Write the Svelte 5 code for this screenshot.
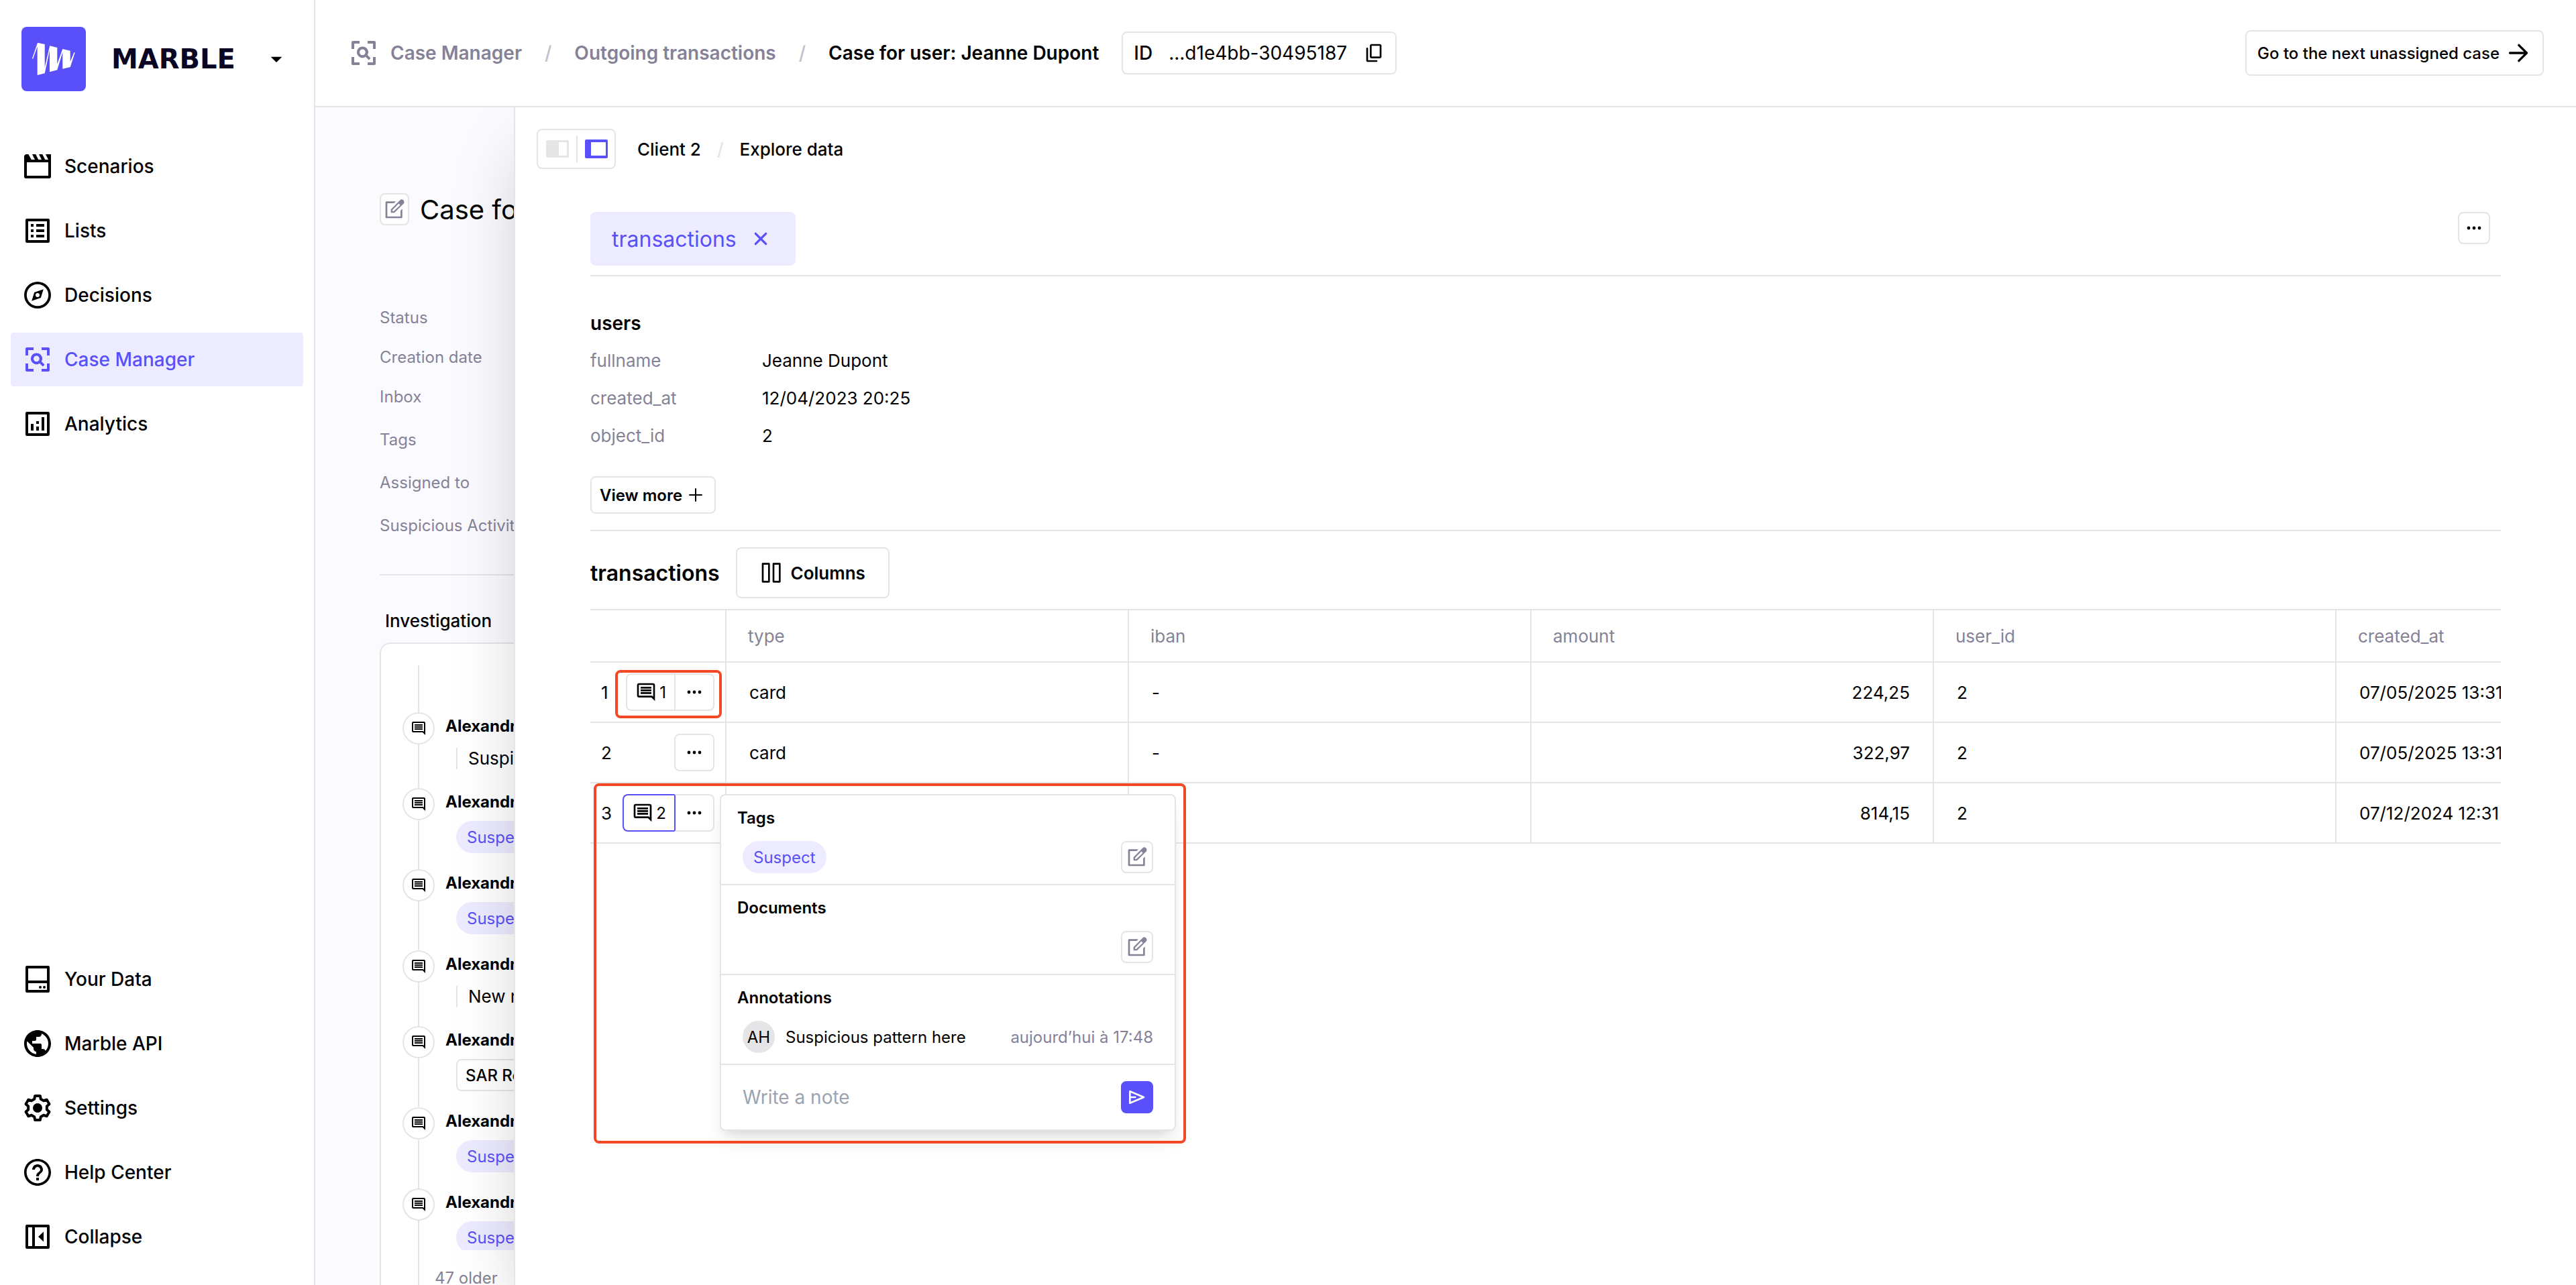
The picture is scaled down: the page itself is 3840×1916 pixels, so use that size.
<script>
	const frame = 'M4 3h16a1 1 0 0 1 1 1v16a1 1 0 0 1-1 1H4a1 1 0 0 1-1-1V4a1 1 0 0 1 1-1zM5 5v14h14V5z';

	// all paths are drawn on a 24 x 24 grid
	const icons = {
		scenarios:
			'M22 3h-4l2 4h-2.4l-2-4H13l2 4h-2.4l-2-4H8l2 4H7.4L5.2 3H3.8C2.8 3 2 3.8 2 4.8v14.9c0 .7.6 1.3 1.3 1.3h17.4c.7 0 1.3-.6 1.3-1.3zM4 9h16v10H4z',
		lists: frame + 'M7 7h2v2H7zM7 11h2v2H7zM7 15h2v2H7zM11 7h6v2h-6zM11 11h6v2h-6zM11 15h6v2h-6z',
		decisions:
			'M12 2a10 10 0 1 0 0 20 10 10 0 0 0 0-20zm0 1.9a8.1 8.1 0 1 1 0 16.2 8.1 8.1 0 0 1 0-16.2zM16.4 7.6 14.4 14 7.6 16.4 9.6 10zM12 10.5a1.5 1.5 0 1 0 0 3 1.5 1.5 0 0 0 0-3z',
		cases:
			'M3 4a1 1 0 0 1 1-1h5v2H5v4H3zM15 3h5a1 1 0 0 1 1 1v5h-2V5h-4zM3 15h2v4h4v2H4a1 1 0 0 1-1-1zM19 15h2v5a1 1 0 0 1-1 1h-5v-2h4zM11.2 7.2a4.2 4.2 0 1 0 2.3 7.7l2.4 2.4 1.4-1.4-2.4-2.4a4.2 4.2 0 0 0-3.7-6.3zm0 2a2.2 2.2 0 1 1 0 4.4 2.2 2.2 0 0 1 0-4.4z',
		analytics: frame + 'M7 12h2v5H7zM11 10h2v2h-2zM11 14h2v3h-2zM15 7h2v10h-2z',
		data: 'M4 2h16a1 1 0 0 1 1 1v18a1 1 0 0 1-1 1H4a1 1 0 0 1-1-1V3a1 1 0 0 1 1-1zM5 4v9h14V4zM5 15v5h14v-5zM14 17a1 1 0 1 0 0 2 1 1 0 0 0 0-2zM17 17a1 1 0 1 0 0 2 1 1 0 0 0 0-2z',
		api: 'M12 2C6.48 2 2 6.48 2 12s4.48 10 10 10 10-4.48 10-10S17.52 2 12 2zm-1 17.93c-3.95-.49-7-3.85-7-7.93 0-.62.08-1.21.21-1.79L9 15v1c0 1.1.9 2 2 2v1.93zm6.9-2.54c-.26-.81-1-1.39-1.9-1.39h-1v-3c0-.55-.45-1-1-1H8v-2h2c.55 0 1-.45 1-1V7h2c1.1 0 2-.9 2-2v-.41c2.93 1.19 5 4.06 5 7.41 0 2.08-.8 3.97-2.1 5.39z',
		help: 'M11 18h2v-2h-2v2zm1-16C6.48 2 2 6.48 2 12s4.48 10 10 10 10-4.48 10-10S17.52 2 12 2zm0 18.2c-4.5 0-8.2-3.7-8.2-8.2S7.5 3.8 12 3.8s8.2 3.7 8.2 8.2-3.7 8.2-8.2 8.2zM12 6c-2.21 0-4 1.79-4 4h2c0-1.1.9-2 2-2s2 .9 2 2c0 2-3 1.75-3 5h2c0-2.25 3-2.5 3-5 0-2.21-1.79-4-4-4z',
		collapse: frame + 'M8 5h2v14H8zM12.5 12l4-3.8v7.6z',
		comment:
			'M22 4c0-1.1-.9-2-2-2H4c-1.1 0-2 .9-2 2v12c0 1.1.9 2 2 2h14l4 4zM20 4v13.17L18.83 16H4V4zM6 12h12v2H6zM6 9h12v2H6zM6 6h12v2H6z',
		more: 'M6 10.2a1.8 1.8 0 1 0 0 3.6 1.8 1.8 0 0 0 0-3.6zM12 10.2a1.8 1.8 0 1 0 0 3.6 1.8 1.8 0 0 0 0-3.6zM18 10.2a1.8 1.8 0 1 0 0 3.6 1.8 1.8 0 0 0 0-3.6z',
		edit: 'M13.5 3.2H3.2c-.7 0-1.2.5-1.2 1.2v16.4c0 .7.5 1.2 1.2 1.2h16.4c.7 0 1.2-.5 1.2-1.2V11.5l-2 2V20H4V5.2h7.5zM21.8 1.7a2.4 2.4 0 0 0-3.4 0L8 12.1V16h3.9L22.3 5.6c1-1.1.6-2.9-.5-3.9zM16.8 5.7l1.7 1.7L11.1 14.2H9.8v-1.4z',
		caret: 'M7 10h10l-5 5z'
	};

	const mainNav = [
		{ label: 'Scenarios', icon: 'scenarios' },
		{ label: 'Lists', icon: 'lists' },
		{ label: 'Decisions', icon: 'decisions' },
		{ label: 'Case Manager', icon: 'cases', active: true },
		{ label: 'Analytics', icon: 'analytics' }
	];

	const bottomNav = [
		{ label: 'Your Data', icon: 'data' },
		{ label: 'Marble API', icon: 'api' },
		{ label: 'Settings', icon: 'settings' },
		{ label: 'Help Center', icon: 'help' },
		{ label: 'Collapse', icon: 'collapse' }
	];

	const details = ['Status', 'Creation date', 'Inbox'];
	const editableDetails = ['Tags', 'Assigned to', 'Suspicious Activity'];

	const events = [
		{ kind: 'note', text: 'Suspicious' },
		{ kind: 'tag', text: 'Suspect' },
		{ kind: 'tag', text: 'Suspect' },
		{ kind: 'note', text: 'New note' },
		{ kind: 'file', text: 'SAR Report' },
		{ kind: 'tag', text: 'Suspect' },
		{ kind: 'tag', text: 'Suspect' }
	];

	const user = [
		['fullname', 'Jeanne Dupont'],
		['created_at', '12/04/2023 20:25'],
		['object_id', '2']
	];

	const columns = ['type', 'iban', 'amount', 'user_id', 'created_at'];

	const rows = [
		{ notes: 1, type: 'card', iban: '-', amount: '224,25', user_id: '2', created_at: '07/05/2025 13:31' },
		{ notes: 0, type: 'card', iban: '-', amount: '322,97', user_id: '2', created_at: '07/05/2025 13:31' },
		{ notes: 2, type: 'card', iban: '-', amount: '814,15', user_id: '2', created_at: '07/12/2024 12:31' }
	];

	let openRow = $state(2);
	let note = $state('');

	function toggleNotes(i) {
		openRow = openRow === i ? -1 : i;
	}
</script>

{#snippet icon(name, size = 'md')}
	<svg class="icon {size}" viewBox="0 0 24 24" aria-hidden="true">
		{#if name === 'settings'}
			<path
				class="line"
				d="M9.6 5.4 10.1 3h3.8l.5 2.4 2.12 1.22 2.32-.77 1.9 3.3-1.82 1.63v2.44l1.82 1.63-1.9 3.3-2.32-.77-2.12 1.22-.5 2.4h-3.8l-.5-2.4-2.12-1.22-2.32.77-1.9-3.3 1.82-1.63v-2.44L3.26 9.15l1.9-3.3 2.32.77z"
			/>
			<circle cx="12" cy="12" r="3.5" />
		{:else if name === 'arrow'}
			<path class="line" d="M4.5 12h14.5M12.5 5l7 7-7 7" />
		{:else if name === 'plus'}
			<path class="line" d="M12 3v18M3 12h18" />
		{:else if name === 'close'}
			<path class="line" d="M7.4 7.4l9.2 9.2M16.6 7.4l-9.2 9.2" />
		{:else if name === 'copy'}
			<path class="line" d="M9.5 3h9a1 1 0 0 1 1 1v12a1 1 0 0 1-1 1h-9a1 1 0 0 1-1-1V4a1 1 0 0 1 1-1zM4.5 7v13a1 1 0 0 0 1 1H15" />
		{:else if name === 'columns'}
			<path class="line" d="M3 2h7v20H3zM15 2h7v20h-7z" />
		{:else if name === 'send'}
			<path class="line" d="M4 5.5 19.5 12 4 18.5zM4.5 12H10" />
		{:else}
			<path fill-rule="evenodd" d={icons[name]} />
		{/if}
	</svg>
{/snippet}

{#snippet nav(items)}
	<ul class="nav">
		{#each items as item}
			<li>
				<a class="nav-item" class:active={item.active} href="#{item.icon}">
					{@render icon(item.icon, 'lg')}
					{item.label}
				</a>
			</li>
		{/each}
	</ul>
{/snippet}

<div class="app">
	<aside class="sidebar">
		<button class="brand">
			<svg class="logo" viewBox="0 0 96 96" aria-hidden="true">
				<rect width="96" height="96" rx="8" />
				<path
					d="M16 47l8-23.3 10.7 2.3v34.5L42.2 28.3 53.3 31v24.5L61.3 33l11.4 2.7v16.3L78.5 38l1.2.4L72.7 60l-11.4 2.7V38L53.3 64.3 42 67.3V35L34.7 69.3 23.7 72V29.5L17 48z"
				/>
			</svg>
			<span class="wordmark">MARBLE</span>
			{@render icon('caret', 'md')}
		</button>
		<nav class="menus">
			{@render nav(mainNav)}
			{@render nav(bottomNav)}
		</nav>
	</aside>

	<div class="page">
		<header class="topbar">
			<a class="crumb crumb-root" href="#cases">
				{@render icon('cases', 'lg')}
				Case Manager
			</a>
			<span class="slash">/</span>
			<a class="crumb" href="#inbox">Outgoing transactions</a>
			<span class="slash">/</span>
			<span class="crumb current">Case for user: Jeanne Dupont</span>
			<button class="case-id">
				<b>ID</b>
				<span>...d1e4bb-30495187</span>
				{@render icon('copy', 'sm')}
			</button>
			<button class="next-case">
				Go to the next unassigned case
				{@render icon('arrow', 'md')}
			</button>
		</header>

		<main class="body">
			<section class="case">
				<div class="case-title">
					<button class="square" aria-label="Edit name">{@render icon('edit', 'sm')}</button>
					<h1>Case for user</h1>
				</div>
				<ul class="details">
					{#each details as label}
						<li>{label}</li>
					{/each}
				</ul>
				<ul class="details editable">
					{#each editableDetails as label}
						<li>{label}</li>
					{/each}
				</ul>
				<h2>Investigation</h2>
				<div class="card">
					<div class="timeline">
						<ul class="events">
							{#each events as event}
								<li class="event">
									<span class="dot">{@render icon('comment', 'xs')}</span>
									<div>
										<b>Alexandre</b>
										<div class="content">
											{#if event.kind === 'tag'}
												<span class="pill">{event.text}</span>
											{:else if event.kind === 'note'}
												<p class="quote">{event.text}</p>
											{:else}
												<a class="file" href="#report">{event.text}</a>
											{/if}
										</div>
									</div>
								</li>
							{/each}
						</ul>
						<p class="older">47 older</p>
					</div>
				</div>
			</section>

			<section class="drawer">
				<div class="drawer-head">
					<div class="toggle">
						<button aria-label="Half width">
							<svg viewBox="0 0 34 28" aria-hidden="true">
								<path class="muted" fill-rule="evenodd" d="M2 1h30a2 2 0 0 1 2 2v22a2 2 0 0 1-2 2H2a2 2 0 0 1-2-2V3a2 2 0 0 1 2-2zM19 4v20h12V4z" />
							</svg>
						</button>
						<button aria-label="Full width">
							<svg viewBox="0 0 34 28" aria-hidden="true">
								<path fill-rule="evenodd" d="M2 0h30a2 2 0 0 1 2 2v24a2 2 0 0 1-2 2H2a2 2 0 0 1-2-2V2a2 2 0 0 1 2-2zM9 4v20h22V4z" />
							</svg>
						</button>
					</div>
					<div class="trail">
						<span>Client 2</span>
						<span class="light">/</span>
						<span>Explore data</span>
					</div>
				</div>

				<div class="explorer">
					<div class="tabs">
						<button class="tab">
							transactions
							{@render icon('close', 'md')}
						</button>
						<button class="square" aria-label="More">{@render icon('more', 'sm')}</button>
					</div>

					<h3>users</h3>
					<dl class="fields">
						{#each user as [key, value]}
							<dt>{key}</dt>
							<dd>{value}</dd>
						{/each}
					</dl>
					<button class="view-more">
						View more
						{@render icon('plus', 'xs')}
					</button>

					<div class="table-head">
						<h2>transactions</h2>
						<button class="columns">
							{@render icon('columns', 'sm')}
							Columns
						</button>
					</div>

					<div class="table-wrap">
						<table>
							<thead>
								<tr>
									<th class="index"></th>
									{#each columns as column}
										<th>{column}</th>
									{/each}
								</tr>
							</thead>
							<tbody>
								{#each rows as row, i}
									<tr>
										<td class="index">
											<div class="row-tools">
												{i + 1}
												<div class="group">
													{#if row.notes}
														<button class="notes" class:open={openRow === i} onclick={() => toggleNotes(i)}>
															{@render icon('comment', 'sm')}
															{row.notes}
														</button>
													{/if}
													<button class="dots" aria-label="Row actions">{@render icon('more', 'sm')}</button>
													{#if i === 0}
														<span class="highlight small"></span>
													{/if}
													{#if openRow === i}
														<div class="popover">
															<section>
																<h4>Tags</h4>
																<div class="line-item">
																	<span class="pill">Suspect</span>
																	<button class="square end" aria-label="Edit tags">{@render icon('edit', 'sm')}</button>
																</div>
															</section>
															<section>
																<h4>Documents</h4>
																<div class="line-item">
																	<button class="square end" aria-label="Edit documents">{@render icon('edit', 'sm')}</button>
																</div>
															</section>
															<section>
																<h4>Annotations</h4>
																<div class="line-item">
																	<span class="avatar">AH</span>
																	<span>Suspicious pattern here</span>
																	<time class="end">aujourd’hui à 17:48</time>
																</div>
															</section>
															<form class="write">
																<input aria-label="Note" placeholder="Write a note" bind:value={note} />
																<button class="square send" type="button" aria-label="Send">{@render icon('send', 'sm')}</button>
															</form>
															<span class="highlight large"></span>
														</div>
													{/if}
												</div>
											</div>
										</td>
										<td>{row.type}</td>
										<td>{row.iban}</td>
										<td class="number">{row.amount}</td>
										<td>{row.user_id}</td>
										<td>{row.created_at}</td>
									</tr>
								{/each}
							</tbody>
						</table>
					</div>
				</div>
			</section>
		</main>
	</div>
</div>

<style>
	:global(body) {
		margin: 0;
	}

	.app {
		--purple: #5a50fa;
		--purple-light: #edebff;
		--grey: #858297;
		--border: #e5e5e5;
		display: flex;
		height: 100vh;
		overflow: hidden;
		background: #fff;
		color: #000;
		font-family: Inter, 'Liberation Sans', sans-serif;
		font-size: 24px;
	}

	.app * {
		box-sizing: border-box;
	}

	button {
		display: flex;
		align-items: center;
		margin: 0;
		padding: 0;
		border: 2px solid var(--border);
		border-radius: 8px;
		background: #fff;
		color: inherit;
		font: inherit;
		cursor: pointer;
	}

	a {
		color: inherit;
		text-decoration: none;
	}

	ul,
	dl,
	dd,
	p,
	h1,
	h2,
	h3,
	h4 {
		margin: 0;
		padding: 0;
		list-style: none;
	}

	.icon {
		flex: none;
		fill: currentColor;
	}

	.icon .line {
		fill: none;
		stroke: currentColor;
		stroke-width: 2;
		stroke-linecap: round;
		stroke-linejoin: round;
	}

	.xs {
		width: 24px;
		height: 24px;
	}

	.sm {
		width: 32px;
		height: 32px;
	}

	.md {
		width: 40px;
		height: 40px;
	}

	.lg {
		width: 48px;
		height: 48px;
	}

	.square {
		flex: none;
		justify-content: center;
		width: 48px;
		height: 48px;
	}

	/* sidebar */
	.sidebar {
		display: flex;
		flex: none;
		flex-direction: column;
		gap: 72px;
		width: 470px;
		padding: 40px 16px 32px;
		border-right: 2px solid var(--border);
	}

	.brand {
		gap: 38px;
		padding: 0 16px;
		border: 0;
	}

	.logo {
		width: 96px;
		height: 96px;
		fill: #fff;
	}

	.logo rect {
		fill: var(--purple);
	}

	.wordmark {
		width: 188px;
		color: #0a0522;
		font-family: 'DejaVu Sans', sans-serif;
		font-size: 40px;
		font-weight: 700;
		text-align: left;
	}

	.menus {
		display: flex;
		flex: 1;
		flex-direction: column;
		justify-content: space-between;
	}

	.nav {
		display: flex;
		flex-direction: column;
		gap: 16px;
	}

	.nav-item {
		display: flex;
		align-items: center;
		gap: 16px;
		height: 80px;
		padding: 0 16px;
		border-radius: 4px;
		font-size: 28px;
		font-weight: 500;
	}

	.nav-item.active {
		background: var(--purple-light);
		color: var(--purple);
	}

	/* top bar */
	.page {
		display: flex;
		flex: 1;
		flex-direction: column;
		min-width: 0;
	}

	.topbar {
		display: flex;
		flex: none;
		align-items: center;
		gap: 34px;
		height: 160px;
		padding: 0 48px;
		border-bottom: 2px solid var(--border);
		font-size: 28px;
	}

	.crumb {
		color: var(--grey);
		font-weight: 600;
	}

	.crumb.current {
		color: #000;
	}

	.crumb-root {
		display: flex;
		align-items: center;
		gap: 16px;
	}

	.slash {
		color: #c2c1cb;
		font-weight: 500;
	}

	.case-id {
		gap: 24px;
		height: 64px;
		padding: 0 16px;
	}

	.case-id b {
		font-weight: 500;
	}

	.next-case {
		gap: 8px;
		height: 68px;
		margin-left: auto;
		padding: 0 16px;
		font-size: 24px;
		font-weight: 500;
	}

	/* case, partly covered by the drawer */
	.body {
		position: relative;
		flex: 1;
		min-height: 0;
		overflow: hidden;
		background: #fbfbff;
	}

	.case {
		height: 100%;
		padding: 128px 96px 0;
		overflow: hidden;
	}

	.case-title {
		display: flex;
		align-items: center;
		gap: 16px;
		height: 48px;
		margin-bottom: 120px;
		color: var(--grey);
	}

	.case-title .square {
		width: 44px;
	}

	h1 {
		color: #000;
		font-size: 40px;
		font-weight: 400;
	}

	.details {
		display: flex;
		flex-direction: column;
		gap: 24px;
		color: var(--grey);
		line-height: 35px;
	}

	.details.editable {
		padding: 27px 0 52px;
		border-bottom: 2px solid var(--border);
		line-height: 40px;
	}

	.case h2 {
		padding: 48px 8px 12px;
		font-size: 26px;
		font-weight: 500;
		line-height: 40px;
	}

	.card {
		padding: 32px;
		border: 2px solid var(--border);
		border-radius: 16px;
		background: #fff;
	}

	.timeline {
		position: relative;
	}

	.timeline::before {
		content: '';
		position: absolute;
		top: 0;
		bottom: -32px;
		left: 23px;
		width: 2px;
		background: var(--border);
	}

	.events {
		position: relative;
		display: flex;
		flex-direction: column;
		gap: 24px;
		max-height: 872px;
		padding-top: 70px;
		overflow: hidden;
	}

	.event {
		display: flex;
		flex: none;
		gap: 16px;
	}

	.event b {
		display: block;
		font-weight: 700;
		line-height: 41px;
	}

	.dot {
		display: flex;
		flex: none;
		align-items: center;
		justify-content: center;
		width: 48px;
		height: 48px;
		border: 2px solid var(--border);
		border-radius: 50%;
		background: #fff;
	}

	.content {
		display: flex;
		padding: 8px 16px 0;
	}

	.quote {
		height: 32px;
		margin: 4px 0;
		padding-left: 16px;
		border-left: 2px solid var(--border);
		font-size: 26px;
		line-height: 32px;
	}

	.pill {
		display: flex;
		align-items: center;
		height: 48px;
		padding: 0 16px;
		border-radius: 24px;
		background: var(--purple-light);
		color: var(--purple);
	}

	.file {
		display: flex;
		align-items: center;
		height: 48px;
		padding: 0 12px;
		border: 2px solid var(--border);
		border-radius: 8px;
		font-weight: 500;
	}

	.older {
		padding: 24px 48px;
		color: var(--grey);
		line-height: 36px;
	}

	/* drawer */
	.drawer {
		position: absolute;
		inset: 0 0 0 296px;
		padding: 32px 0;
		border-left: 2px solid var(--border);
		background: #fff;
		box-shadow: 0 50px 100px -24px rgba(0, 0, 0, 0.25);
	}

	.drawer-head {
		display: flex;
		align-items: center;
		gap: 32px;
		padding: 0 32px;
	}

	.toggle {
		display: flex;
		align-items: center;
		height: 60px;
		border: 2px solid var(--border);
		border-radius: 8px;
	}

	.toggle button {
		justify-content: center;
		width: 57px;
		height: 40px;
		border: 0;
		border-radius: 0;
		background: none;
	}

	.toggle button + button {
		border-left: 2px solid var(--border);
	}

	.toggle svg {
		width: 34px;
		height: 28px;
		fill: var(--purple);
	}

	.toggle .muted {
		fill: var(--border);
	}

	.trail {
		display: flex;
		gap: 24px;
		font-size: 26px;
		font-weight: 500;
	}

	.light {
		color: var(--border);
	}

	.explorer {
		padding: 64px 112px 0;
	}

	.tabs {
		display: flex;
		align-items: flex-start;
		justify-content: space-between;
		margin-bottom: 50px;
		padding: 0 16px 14px 0;
		border-bottom: 2px solid var(--border);
	}

	.tab {
		gap: 16px;
		height: 80px;
		padding: 0 32px;
		border: 0;
		background: var(--purple-light);
		color: var(--purple);
		font-size: 32px;
	}

	h3 {
		font-size: 28px;
		font-weight: 600;
		line-height: 40px;
	}

	.fields {
		display: grid;
		grid-template-columns: 240px 1fr;
		gap: 16px;
		padding: 16px 0 40px;
		font-size: 26px;
		line-height: 40px;
	}

	.fields dt {
		color: var(--grey);
	}

	.view-more {
		gap: 8px;
		height: 56px;
		padding: 0 16px 0 12px;
		font-weight: 600;
	}

	.table-head {
		display: flex;
		align-items: center;
		gap: 24px;
		margin-top: 24px;
		padding: 24px 0 16px;
		border-top: 2px solid var(--border);
	}

	.table-head h2 {
		font-size: 32px;
		font-weight: 600;
	}

	.columns {
		gap: 14px;
		height: 76px;
		padding: 0 34px;
		font-size: 26px;
		font-weight: 600;
	}

	.table-wrap {
		overflow-x: clip;
	}

	table {
		width: 3201px;
		border-spacing: 0;
		table-layout: fixed;
		font-size: 26px;
	}

	th,
	td {
		padding: 0 34px;
		border-bottom: 2px solid var(--border);
		border-left: 2px solid var(--border);
	}

	th {
		height: 80px;
		padding: 0 32px;
		border-top: 2px solid var(--border);
		color: var(--grey);
		font-weight: 400;
		text-align: left;
	}

	td {
		height: 90px;
	}

	.index {
		width: 201px;
		padding: 0 16px;
		border-left: 0;
	}

	.number {
		text-align: right;
	}

	.row-tools {
		display: flex;
		align-items: center;
		justify-content: space-between;
	}

	.group {
		position: relative;
		display: flex;
		font-size: 24px;
	}

	.notes {
		gap: 4px;
		height: 56px;
		padding: 0 12px;
		border-right: 0;
		border-radius: 8px 0 0 8px;
	}

	.notes.open {
		border-color: var(--purple);
	}

	.notes.open + .dots {
		border-left-color: var(--purple);
	}

	.dots {
		justify-content: center;
		width: 60px;
		height: 56px;
	}

	.notes + .dots {
		border-radius: 0 8px 8px 0;
	}

	.highlight {
		position: absolute;
		border: 4px solid #f44725;
		border-radius: 8px;
		pointer-events: none;
	}

	.small {
		inset: -5px -11px -11px -16px;
	}

	.large {
		inset: -18px -17px -21px -190px;
	}

	/* annotations of one row */
	.popover {
		position: absolute;
		top: 0;
		left: calc(100% + 8px);
		width: 680px;
		border: 2px solid var(--border);
		border-radius: 8px;
		background: #fff;
		box-shadow:
			0 20px 30px -6px rgba(0, 0, 0, 0.1),
			0 8px 12px -8px rgba(0, 0, 0, 0.1);
	}

	.popover section {
		display: flex;
		flex-direction: column;
		gap: 16px;
		padding: 16px 24px;
		border-bottom: 2px solid var(--border);
	}

	h4 {
		font-size: 24px;
		font-weight: 600;
		line-height: 36px;
	}

	.line-item {
		display: flex;
		align-items: center;
		gap: 16px;
		height: 48px;
		padding: 0 8px;
	}

	.line-item .square {
		color: var(--grey);
	}

	.end {
		margin-left: auto;
	}

	time {
		color: var(--grey);
	}

	.avatar {
		display: flex;
		align-items: center;
		justify-content: center;
		width: 48px;
		height: 48px;
		border-radius: 50%;
		background: #e5e5e8;
	}

	.write {
		display: flex;
		align-items: center;
		height: 96px;
		padding: 0 32px;
	}

	input {
		flex: 1;
		min-width: 0;
		padding: 0;
		border: 0;
		outline: 0;
		font: inherit;
		font-size: 28px;
	}

	input::placeholder {
		color: #9ca3af;
	}

	.send {
		border-color: var(--purple);
		background: var(--purple);
		color: #fff;
	}
</style>
